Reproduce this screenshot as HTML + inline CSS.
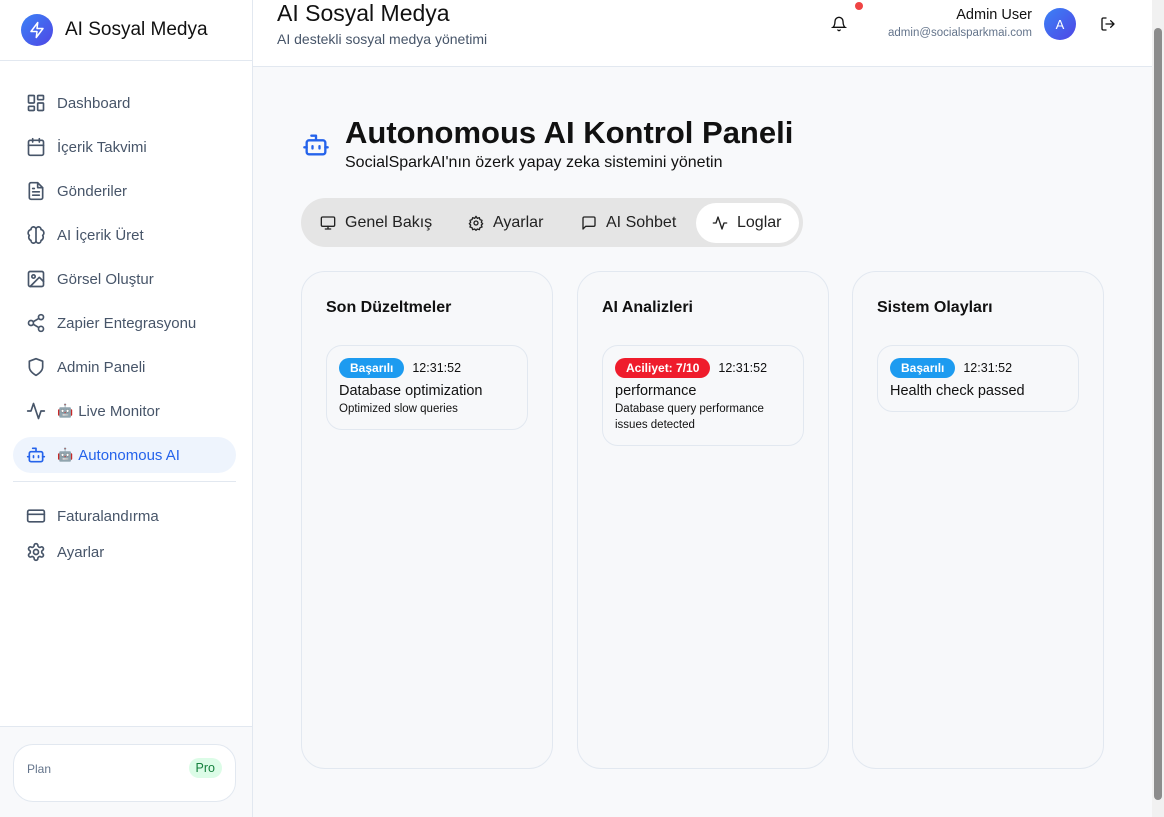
<!DOCTYPE html>
<html><head><meta charset="utf-8"><style>
*{box-sizing:border-box;margin:0;padding:0}
body{width:1164px;height:817px;overflow:hidden;font-family:"Liberation Sans",sans-serif;background:#f8f9fb;position:relative;color:#111}
.sb{position:absolute;left:0;top:0;width:253px;height:817px;background:#fff;border-right:1px solid #e2e8f0}
.logo{height:61px;border-bottom:1px solid #e2e8f0;display:flex;align-items:center;padding-left:21px}
.lc{width:32px;height:32px;border-radius:50%;background:linear-gradient(135deg,#3b82f6,#4f46e5);display:flex;align-items:center;justify-content:center}
.logo span{font-size:19px;font-weight:500;margin-left:12px;color:#111}
.nav{position:absolute;left:13px;width:223px}
.it{height:36px;display:flex;align-items:center;padding-left:13px;font-size:15px;color:#475569;border-radius:18px;position:absolute;left:0;width:223px}
.it svg{width:20px;height:20px;margin-right:11px;stroke:#475569;fill:none;stroke-width:2;stroke-linecap:round;stroke-linejoin:round}
.it.act{background:#eef4fd;color:#2563eb}
.it.act svg{stroke:#2563eb}
.emo{font-size:13px;margin-right:5px}
.sep{position:absolute;left:13px;width:223px;top:481px;border-top:1px solid #e2e8f0}
.foot{position:absolute;left:0;top:726px;width:252px;height:91px;background:#f8f9fb;border-top:1px solid #e2e8f0}
.plan{position:absolute;left:13px;top:17px;width:223px;height:58px;background:#fff;border:1px solid #e2e8f0;border-radius:20px}
.plan .l{position:absolute;left:13px;top:17px;font-size:12px;color:#64748b}
.plan .p{position:absolute;right:13px;top:13px;background:#dcfce7;color:#15803d;font-size:12.5px;padding:3px 7px;border-radius:12px}
.hdr{position:absolute;left:253px;top:0;width:899px;height:67px;background:#fff;border-bottom:1px solid #e2e8f0}
.hdr h1{position:absolute;left:24px;top:0;font-size:23px;font-weight:500}
.hdr .s{position:absolute;left:24px;top:31px;font-size:14px;color:#475569}
.scroll{position:absolute;right:0;top:0;width:12px;height:817px;background:#f1f1f1}
.scroll div{position:absolute;left:2px;top:28px;width:8px;height:772px;background:#8c8c8c;border-radius:4px}
.tabs{position:absolute;left:301px;top:198px;width:502px;height:49px;background:#e5e5e5;border-radius:25px}
.tab{position:absolute;top:5px;height:40px;display:flex;align-items:center;font-size:16px;color:#222}
.tab svg{width:16px;height:16px;margin-right:9px;fill:none;stroke:#222;stroke-width:2;stroke-linecap:round;stroke-linejoin:round}
.card{position:absolute;top:271px;width:252px;height:498px;background:#f7f8fa;border:1px solid #e2e8f0;border-radius:24px}
.card h3{position:absolute;left:24px;top:27px;font-size:16px;font-weight:600;color:#111}
.ent{position:absolute;left:24px;top:73px;width:202px;background:#f7f8fa;border:1px solid #e2e8f0;border-radius:16px;padding:12px 12px 12px}
.bd{display:inline-block;color:#fff;font-size:12px;font-weight:bold;padding:3px 11px;border-radius:11px;margin-right:8px}
.tm{font-size:12.5px;color:#111}
.t1{font-size:14.5px;margin-top:5px;color:#111}
.t2{font-size:11.5px;margin-top:2px;color:#111;line-height:16px}
</style></head><body>
<div class="sb">
 <div class="logo"><div class="lc"><svg width="18" height="18" viewBox="0 0 24 24" fill="none" stroke="#fff" stroke-width="2" stroke-linejoin="round"><path d="M13 2 4 14h8l-1 8 9-12h-8z"/></svg></div><span>AI Sosyal Medya</span></div>
 <div class="nav" style="top:1px">
  <div class="it" style="top:84px"><svg viewBox="0 0 24 24"><rect x="3" y="3" width="7" height="9" rx="1"/><rect x="14" y="3" width="7" height="5" rx="1"/><rect x="14" y="12" width="7" height="9" rx="1"/><rect x="3" y="16" width="7" height="5" rx="1"/></svg>Dashboard</div>
  <div class="it" style="top:128px"><svg viewBox="0 0 24 24"><rect x="3" y="4" width="18" height="18" rx="2"/><path d="M16 2v4M8 2v4M3 10h18"/></svg>İçerik Takvimi</div>
  <div class="it" style="top:172px"><svg viewBox="0 0 24 24"><path d="M14 2H6a2 2 0 0 0-2 2v16a2 2 0 0 0 2 2h12a2 2 0 0 0 2-2V8z"/><path d="M14 2v6h6M16 13H8M16 17H8M10 9H8"/></svg>Gönderiler</div>
  <div class="it" style="top:216px"><svg viewBox="0 0 24 24"><path d="M12 5a3 3 0 1 0-6 .5 4 4 0 0 0-2 7 4 4 0 0 0 2 6A3 3 0 0 0 12 19zM12 5a3 3 0 1 1 6 .5 4 4 0 0 1 2 7 4 4 0 0 1-2 6A3 3 0 0 1 12 19zM12 5v14"/></svg>AI İçerik Üret</div>
  <div class="it" style="top:260px"><svg viewBox="0 0 24 24"><rect x="3" y="3" width="18" height="18" rx="2"/><circle cx="9" cy="9" r="2"/><path d="m21 15-5-5L5 21"/></svg>Görsel Oluştur</div>
  <div class="it" style="top:304px"><svg viewBox="0 0 24 24"><circle cx="18" cy="5" r="3"/><circle cx="6" cy="12" r="3"/><circle cx="18" cy="19" r="3"/><path d="m8.6 13.5 6.8 4M15.4 6.5l-6.8 4"/></svg>Zapier Entegrasyonu</div>
  <div class="it" style="top:348px"><svg viewBox="0 0 24 24"><path d="M12 22s8-4 8-10V5l-8-3-8 3v7c0 6 8 10 8 10z"/></svg>Admin Paneli</div>
  <div class="it" style="top:392px"><svg viewBox="0 0 24 24"><path d="M22 12h-4l-3 9L9 3l-3 9H2"/></svg><span class="emo">🤖</span>Live Monitor</div>
  <div class="it act" style="top:436px"><svg viewBox="0 0 24 24"><path d="M12 8V4H8"/><rect x="4" y="8" width="16" height="12" rx="2"/><path d="M2 14h2M20 14h2M15 13v2M9 13v2"/></svg><span class="emo">🤖</span>Autonomous AI</div>
  <div class="it" style="top:497px"><svg viewBox="0 0 24 24"><rect x="2" y="5" width="20" height="14" rx="2"/><path d="M2 10h20"/></svg>Faturalandırma</div>
  <div class="it" style="top:533px"><svg viewBox="0 0 24 24"><circle cx="12" cy="12" r="3"/><path d="M12.2 2h-.4a2 2 0 0 0-2 2v.2a2 2 0 0 1-1 1.7l-.4.3a2 2 0 0 1-2 0l-.2-.1a2 2 0 0 0-2.7.7l-.2.4a2 2 0 0 0 .7 2.7l.2.1a2 2 0 0 1 1 1.7v.5a2 2 0 0 1-1 1.7l-.2.1a2 2 0 0 0-.7 2.7l.2.4a2 2 0 0 0 2.7.7l.2-.1a2 2 0 0 1 2 0l.4.3a2 2 0 0 1 1 1.7v.2a2 2 0 0 0 2 2h.4a2 2 0 0 0 2-2v-.2a2 2 0 0 1 1-1.7l.4-.3a2 2 0 0 1 2 0l.2.1a2 2 0 0 0 2.7-.7l.2-.4a2 2 0 0 0-.7-2.7l-.2-.1a2 2 0 0 1-1-1.7v-.5a2 2 0 0 1 1-1.7l.2-.1a2 2 0 0 0 .7-2.7l-.2-.4a2 2 0 0 0-2.7-.7l-.2.1a2 2 0 0 1-2 0l-.4-.3a2 2 0 0 1-1-1.7V4a2 2 0 0 0-2-2z"/></svg>Ayarlar</div>
 </div>
 <div class="sep"></div>
 <div class="foot"><div class="plan"><span class="l">Plan</span><span class="p">Pro</span></div></div>
</div>
<div class="hdr">
 <h1>AI Sosyal Medya</h1><div class="s">AI destekli sosyal medya yönetimi</div>
 <svg style="position:absolute;left:578px;top:16px" width="16" height="16" viewBox="0 0 24 24" fill="none" stroke="#111" stroke-width="2" stroke-linecap="round"><path d="M6 8a6 6 0 0 1 12 0c0 7 3 9 3 9H3s3-2 3-9M10.3 21a1.9 1.9 0 0 0 3.4 0"/></svg>
 <div style="position:absolute;left:602px;top:2px;width:8px;height:8px;border-radius:50%;background:#ef4444"></div>
 <div style="position:absolute;right:120px;top:7px;font-size:14.5px;color:#111">Admin User</div>
 <div style="position:absolute;right:120px;top:27px;font-size:11.5px;color:#64748b">admin@socialsparkmai.com</div>
 <div style="position:absolute;left:791px;top:8px;width:32px;height:32px;border-radius:50%;background:linear-gradient(135deg,#3b82f6,#4f46e5);color:#fff;font-size:13px;display:flex;align-items:center;justify-content:center">A</div>
 <svg style="position:absolute;left:847px;top:16px" width="16" height="16" viewBox="0 0 24 24" fill="none" stroke="#111" stroke-width="2" stroke-linecap="round" stroke-linejoin="round"><path d="M9 21H5a2 2 0 0 1-2-2V5a2 2 0 0 1 2-2h4M16 17l5-5-5-5M21 12H9"/></svg>
</div>
<svg style="position:absolute;left:302px;top:131px" width="28" height="28" viewBox="0 0 24 24" fill="none" stroke="#2563eb" stroke-width="2" stroke-linecap="round" stroke-linejoin="round"><path d="M12 8V4H8"/><rect x="4" y="8" width="16" height="12" rx="2"/><path d="M2 14h2M20 14h2M15 13v2M9 13v2"/></svg>
<div style="position:absolute;left:345px;top:115px;font-size:31px;font-weight:bold;color:#111">Autonomous AI Kontrol Paneli</div>
<div style="position:absolute;left:345px;top:154px;font-size:16px;color:#111">SocialSparkAI'nın özerk yapay zeka sistemini yönetin</div>
<div class="tabs">
 <div class="tab" style="left:19px"><svg viewBox="0 0 24 24"><rect x="2" y="3" width="20" height="14" rx="2"/><path d="M8 21h8M12 17v4"/></svg>Genel Bakış</div>
 <div class="tab" style="left:167px"><svg viewBox="0 0 24 24"><circle cx="12" cy="12" r="3"/><path d="M12 2l2 3 3-1 1 3 3 1-1 3 2 2-2 2 1 3-3 1-1 3-3-1-2 2-2-2-3 1-1-3-3-1 1-3-2-2 2-2-1-3 3-1 1-3 3 1z"/></svg>Ayarlar</div>
 <div class="tab" style="left:280px"><svg viewBox="0 0 24 24"><path d="M21 15a2 2 0 0 1-2 2H7l-4 4V5a2 2 0 0 1 2-2h14a2 2 0 0 1 2 2z"/></svg>AI Sohbet</div>
 <div class="tab" style="left:395px;width:103px;background:#fff;border-radius:20px;padding-left:16px"><svg viewBox="0 0 24 24"><path d="M22 12h-4l-3 9L9 3l-3 9H2"/></svg>Loglar</div>
</div>
<div class="card" style="left:301px"><h3>Son Düzeltmeler</h3>
 <div class="ent"><span class="bd" style="background:#1d9bf0">Başarılı</span><span class="tm">12:31:52</span><div class="t1">Database optimization</div><div class="t2">Optimized slow queries</div></div></div>
<div class="card" style="left:577px"><h3>AI Analizleri</h3>
 <div class="ent"><span class="bd" style="background:#ef1c2c">Aciliyet: 7/10</span><span class="tm">12:31:52</span><div class="t1">performance</div><div class="t2">Database query performance issues detected</div></div></div>
<div class="card" style="left:852px"><h3>Sistem Olayları</h3>
 <div class="ent"><span class="bd" style="background:#1d9bf0">Başarılı</span><span class="tm">12:31:52</span><div class="t1">Health check passed</div></div></div>
<div class="scroll"><div></div></div>
</body></html>
